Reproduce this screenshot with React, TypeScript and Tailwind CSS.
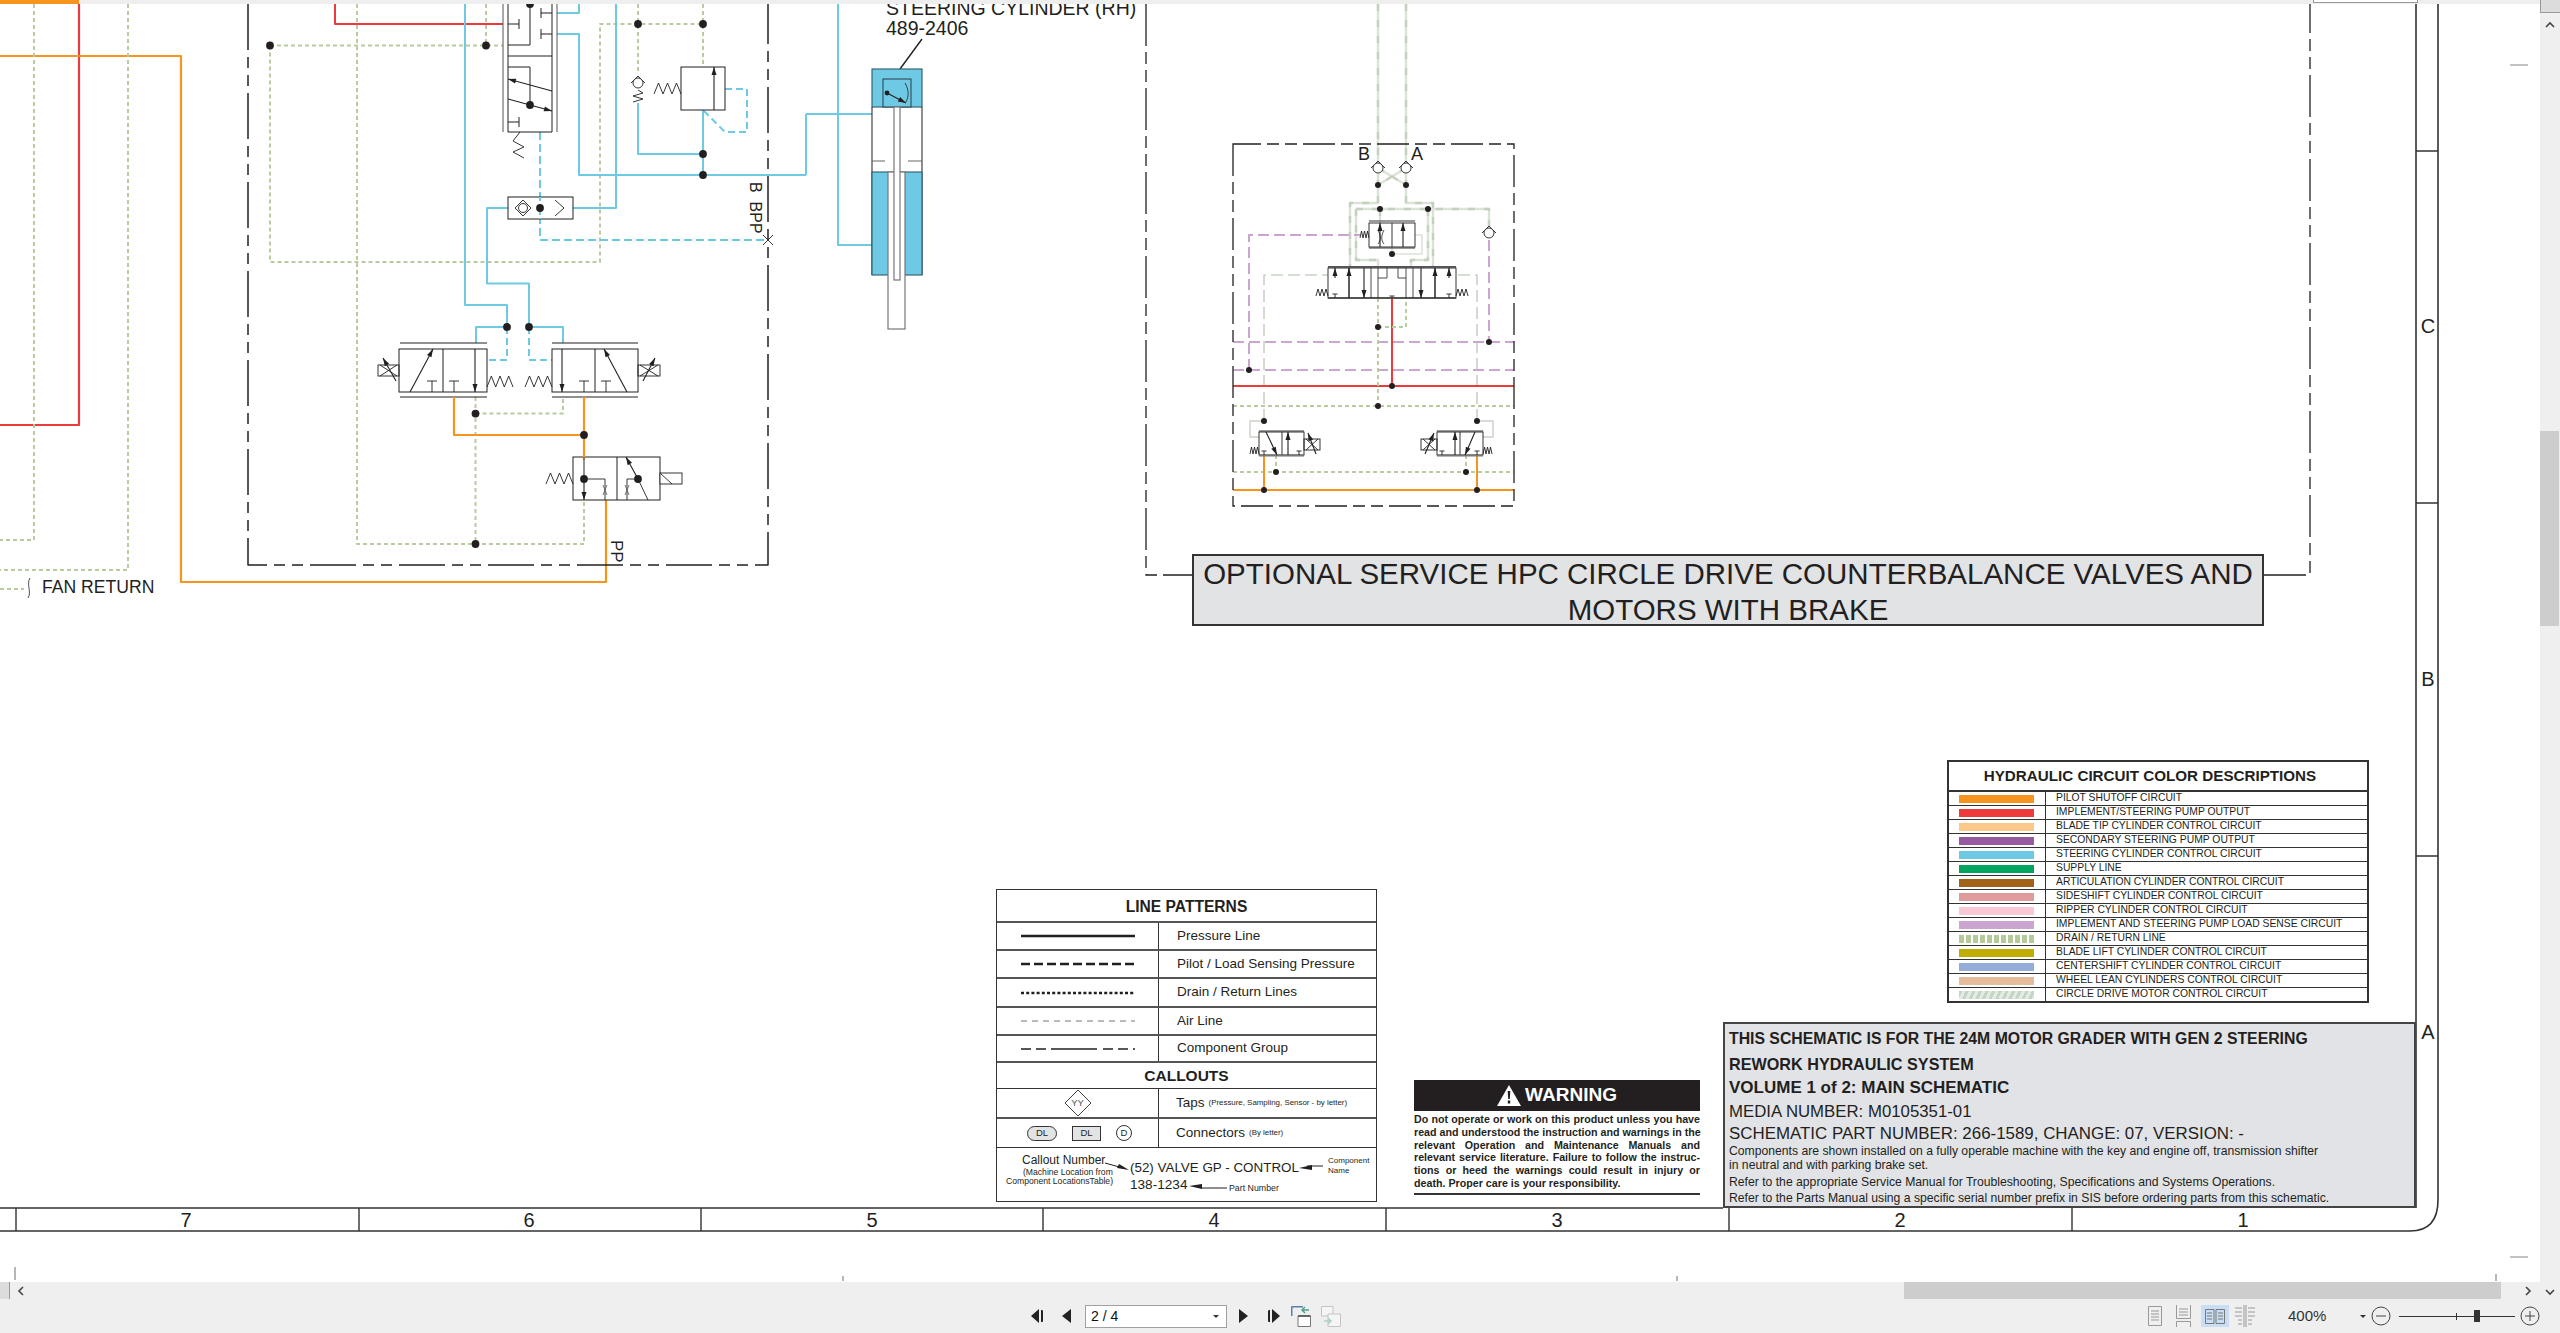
const INK = '#231f20';
const BLUE = '#6ecae4';
const ORANGE = '#f7941d';
const RED = '#ed3b3b';
const DRAIN = '#b9cc9f';
const PURPLE = '#cba5cf';
const HATCH = '#dbe3d9';
const HATCH2 = '#c3d2bf';
const AIR = '#c9d2c6';

const circuitRows = [
  { label: 'PILOT SHUTOFF CIRCUIT', swatch: 'bg-[#f7941d]' },
  { label: 'IMPLEMENT/STEERING PUMP OUTPUT', swatch: 'bg-[#ed3b3b]' },
  { label: 'BLADE TIP CYLINDER CONTROL CIRCUIT', swatch: 'bg-[#fdc98b]' },
  { label: 'SECONDARY STEERING PUMP OUTPUT', swatch: 'bg-[#97599f]' },
  { label: 'STEERING CYLINDER CONTROL CIRCUIT', swatch: 'bg-[#6ecae4]' },
  { label: 'SUPPLY LINE', swatch: 'bg-[#00a65f]' },
  { label: 'ARTICULATION CYLINDER CONTROL CIRCUIT', swatch: 'bg-[#a1631a]' },
  { label: 'SIDESHIFT CYLINDER CONTROL CIRCUIT', swatch: 'bg-[#df9a9b]' },
  { label: 'RIPPER CYLINDER CONTROL CIRCUIT', swatch: 'bg-[#f8c8d4]' },
  { label: 'IMPLEMENT AND STEERING PUMP LOAD SENSE CIRCUIT', swatch: 'bg-[#cba5cf]' },
  { label: 'DRAIN / RETURN LINE', swatch: 'bg-[repeating-linear-gradient(90deg,#b5c99a_0,#b5c99a_5px,transparent_5px,transparent_7px)]' },
  { label: 'BLADE LIFT CYLINDER CONTROL CIRCUIT', swatch: 'bg-[#bfae00]' },
  { label: 'CENTERSHIFT CYLINDER CONTROL CIRCUIT', swatch: 'bg-[#93acd8]' },
  { label: 'WHEEL LEAN CYLINDERS CONTROL CIRCUIT', swatch: 'bg-[#e5bd9b]' },
  { label: 'CIRCLE DRIVE MOTOR CONTROL CIRCUIT', swatch: 'bg-[repeating-linear-gradient(115deg,#c5d5c5_0,#c5d5c5_3px,#e4ebe4_3px,#e4ebe4_6px)]' },
];

const linePatterns = [
  { label: 'Pressure Line', h: 'h-[28px]', width: 2.4, dash: undefined, color: INK },
  { label: 'Pilot / Load Sensing Pressure', h: 'h-[28px]', width: 2.4, dash: '9 4', color: INK },
  { label: 'Drain / Return Lines', h: 'h-[29px]', width: 2.4, dash: '3 2.2', color: INK },
  { label: 'Air Line', h: 'h-[28px]', width: 1, dash: '6 5', color: '#777' },
  { label: 'Component Group', h: 'h-[27px]', width: 1.4, dash: '10 5 10 5 46 6 10 5 10 5', color: INK },
];

function Wire({ d, color, dash, w = 2 }: { d: string; color: string; dash?: string; w?: number }) {
  return <path d={d} fill="none" stroke={color} strokeWidth={w} strokeDasharray={dash} strokeLinejoin="round" />;
}

function Dot({ x, y }: { x: number; y: number }) {
  return <circle cx={x} cy={y} r={3.9} fill={INK} />;
}

function Arrow({ x1, y1, x2, y2, color = INK }: { x1: number; y1: number; x2: number; y2: number; color?: string }) {
  const a = Math.atan2(y2 - y1, x2 - x1);
  const px = (d: number, o: number) => `${x2 - d * Math.cos(a) - o * Math.sin(a)},${y2 - d * Math.sin(a) + o * Math.cos(a)}`;
  return (
    <g>
      <path d={`M${x1} ${y1}L${x2} ${y2}`} stroke={color} strokeWidth={1.1} />
      <polygon points={`${x2},${y2} ${px(8, 2.5)} ${px(8, -2.5)}`} fill={color} />
    </g>
  );
}

// zigzag spring between two x values
function Spring({ x0, x1, y0, y1, n = 3 }: { x0: number; x1: number; y0: number; y1: number; n?: number }) {
  const step = (x1 - x0) / (n * 2);
  let d = `M${x0} ${y1}`;
  for (let i = 1; i <= n * 2; i++) d += `L${x0 + step * i} ${i % 2 ? y0 : y1}`;
  return <path d={d} fill="none" stroke={INK} strokeWidth={0.9} />;
}

function Tee({ x, y, up = 11, cap = 5 }: { x: number; y: number; up?: number; cap?: number }) {
  return <path d={`M${x} ${y}V${y - up}M${x - cap} ${y - up}H${x + cap}`} stroke={INK} strokeWidth={0.9} fill="none" />;
}

function Check({ x, y, r = 5 }: { x: number; y: number; r?: number }) {
  return (
    <g>
      <path d={`M${x - r - 2} ${y}L${x} ${y - r - 2}L${x + r + 2} ${y}`} fill="none" stroke={INK} strokeWidth={0.9} />
      <circle cx={x} cy={y} r={r} fill="#fff" stroke={INK} strokeWidth={0.9} />
    </g>
  );
}

function Hatched({ d }: { d: string }) {
  return (
    <g>
      <Wire d={d} color={HATCH} w={2.4} />
      <Wire d={d} color={HATCH2} w={2.4} dash="7 9" />
    </g>
  );
}

// solenoid block with crossed variable arrow
function CrossSolenoid({ x, y, w, h }: { x: number; y: number; w: number; h: number }) {
  return (
    <g fill="none" stroke={INK} strokeWidth={0.9}>
      <rect x={x} y={y} width={w} height={h} />
      <path d={`M${x + 2} ${y}L${x + w - 2} ${y + h}M${x + w - 2} ${y}L${x + 2} ${y + h}`} />
    </g>
  );
}

function LeftSystem() {
  return (
    <g>
      <Wire d="M79 4V425H0" color={RED} w={2.2} />
      <Wire d="M0 56H181V582H606V500" color={ORANGE} w={2.2} />
      <Wire d="M34 4V540H0" color={DRAIN} dash="4 3" />
      <Wire d="M128 4V570H0" color={DRAIN} dash="4 3" />
      <Wire d="M0 589H24" color={DRAIN} dash="4 3" />
      <path d="M30 578C26 584 32 592 28 598" fill="none" stroke={INK} strokeWidth={0.8} />
      <text x={42} y={593} fontSize={17.6} fill={INK}>FAN RETURN</text>

      <Wire d="M248 4V565H768V4" color={INK} w={1.5} dash="46 7 11 7 11 7" />

      <Wire d="M335 4V24H503" color={RED} w={2} />
      <Wire d="M270 45.5H503M270 45.5V262H600V24H703M357 4V544H584V500M486 4V45M638 4V74M703 4V67" color={DRAIN} dash="4 3" />
      <Wire d="M475.5 397V544M475.5 413.6H563V397" color={DRAIN} dash="4 3" />

      <Wire d="M465 4V305H507V327H476V343M529 327H563V343M529 327V283.5H487V208H508M573 208H616V4" color={BLUE} w={2} />
      <Wire d="M557 13H579V4M557 34H579V175H806M806 114V175M806 114H872M838 4V245H872" color={BLUE} w={2} />
      <Wire d="M638 103V154H703M703 110V175" color={BLUE} w={2} />
      <Wire d="M507 327V360H487M529 327V360H552" color={BLUE} dash="7 4" />
      <Wire d="M540 132V240H768" color={BLUE} dash="8 4" />
      <Wire d="M725 89H747V132H725L703 110" color={BLUE} dash="7 4" />

      {/* top spool */}
      <g fill="none" stroke={INK} strokeWidth={1}>
        <path d="M503 4V132M557 4V132" stroke="#555" />
        <path d="M508 4V132H552V4M508 45H530V4M508 56H552M508 67H530V105" />
        <path d="M508 24H519M519 19V29" />
        <path d="M552 13H541M541 8V18M552 34H541M541 29V39M508 122H519M519 117V127" />
      </g>
      <Arrow x1={552} y1={91} x2={508} y2={79} />
      <Arrow x1={508} y1={99} x2={552} y2={111} />
      <path d="M520 132L513 141L524 147L513 152L524 158" fill="none" stroke={INK} strokeWidth={0.9} />

      {/* shuttle */}
      <rect x={508} y={197} width={65} height={22} fill="#fff" stroke={INK} strokeWidth={1} />
      <path d="M523 200L531 208L523 216L515 208ZM555 200L564 208L555 216" fill="none" stroke={INK} strokeWidth={0.9} />
      <circle cx={523} cy={208} r={4.5} fill="#fff" stroke={INK} strokeWidth={0.9} />
      <Wire d="M540 197V219" color={BLUE} dash="4 3" />

      {/* relief valve */}
      <rect x={681} y={67} width={44} height={43} fill="#fff" stroke={INK} strokeWidth={1} />
      <Arrow x1={714} y1={110} x2={714} y2={67} />
      <Spring x0={654} x1={681} y0={83} y1={94} />
      <Check x={638} y={83} />
      <path d="M638 90L643 93L633 96L643 99L633 102" fill="none" stroke={INK} strokeWidth={0.9} />

      {/* pilot valves */}
      <g fill="#fff" stroke={INK} strokeWidth={1}>
        <rect x={399} y={349} width={88} height={43} />
        <rect x={552} y={349} width={86} height={43} />
        <rect x={573} y={457} width={87} height={43} />
      </g>
      <path d="M400 343H487M400 397H487M552 343H638M552 397H638M443 349V392M595 349V392M617 457V500" stroke={INK} strokeWidth={1} fill="none" />
      <Arrow x1={410} y1={392} x2={433} y2={349} />
      <Tee x={432} y={392} />
      <Tee x={454} y={392} />
      <Arrow x1={475} y1={349} x2={475} y2={392} />
      <Spring x0={487} x1={513} y0={376} y1={387} />
      <CrossSolenoid x={378} y={365} w={21} h={11} />
      <Arrow x1={396} y1={381} x2={383} y2={358} />
      <Arrow x1={562} y1={349} x2={562} y2={392} />
      <Tee x={584} y={392} />
      <Tee x={606} y={392} />
      <Arrow x1={627} y1={392} x2={604} y2={349} />
      <Spring x0={525} x1={552} y0={376} y1={387} />
      <CrossSolenoid x={638} y={365} w={22} h={11} />
      <Arrow x1={643} y1={381} x2={655} y2={358} />

      <Wire d="M454 397V435H584M584 397V460" color={ORANGE} w={2.2} />
      <Wire d="M584 457V479" color="#666" w={1.4} />
      <Arrow x1={584} y1={479} x2={584} y2={500} />
      <path d="M584 479H605V500M627 500V479H638M648 500L638 479" fill="none" stroke={INK} strokeWidth={0.9} />
      <Arrow x1={638} y1={479} x2={626} y2={457} />
      <path d="M603 485L607 495M607 485L603 495M625 485L629 495M629 485L625 495" stroke="#555" strokeWidth={0.8} />
      <Spring x0={546} x1={573} y0={473} y1={484} />
      <rect x={660} y={473} width={22} height={11} fill="#fff" stroke={INK} strokeWidth={0.9} />
      <path d="M660 473L672 484" stroke={INK} strokeWidth={0.9} />

      {[[270, 45.5], [486, 45.5], [638, 24], [703, 24], [530, 4], [530, 105], [703, 154], [703, 175], [540, 208], [507, 327], [529, 327], [475.5, 413.6], [584, 435], [584, 479], [638, 479], [475.5, 544]].map(([x, y]) => (
        <Dot key={`${x}-${y}`} x={x} y={y} />
      ))}

      <path d="M763 235L773 245M773 235L763 245" stroke={INK} strokeWidth={0.9} />
      <text transform="translate(611 540) rotate(90)" fontSize={17} fill={INK}>PP</text>
      <text transform="translate(750 182) rotate(90)" fontSize={16} fill={INK} xmlSpace="preserve">B  BPP</text>

      {/* steering cylinder */}
      <text x={886} y={15} fontSize={19.5} fill={INK}>STEERING CYLINDER (RH)</text>
      <text x={886} y={35} fontSize={19.5} fill={INK}>489-2406</text>
      <path d="M922 39L900 69" stroke={INK} strokeWidth={1.4} />
      <rect x={872} y={69} width={50} height={38} fill={BLUE} stroke="#2a5b68" strokeWidth={1.1} />
      <rect x={883} y={79} width={28} height={28} fill={BLUE} stroke="#2a3b48" strokeWidth={1} />
      <Arrow x1={887} y1={93} x2={906} y2={103} />
      <circle cx={887} cy={93} r={2.4} fill={INK} />
      <path d="M905 83C909 90 909 96 906 102" fill="none" stroke={INK} strokeWidth={0.8} />
      <path d="M872 107V275M922 107V275" stroke="#333" strokeWidth={1.1} />
      <rect x={872} y={172} width={50} height={103} fill={BLUE} stroke="#2a5b68" strokeWidth={1.1} />
      <path d="M872 161H885M908 161H922" stroke="#666" strokeWidth={1.2} />
      <rect x={888} y={172} width={17} height={157} fill="#fff" stroke="#777" strokeWidth={1.2} />
      <rect x={894} y={107} width={6} height={173} fill="#fff" stroke="#777" strokeWidth={1.2} />
    </g>
  );
}

function ServiceGroup() {
  return (
    <g>
      <path d="M1146 4V575H1192M2264 575H2310V4" fill="none" stroke={INK} strokeWidth={1.3} strokeDasharray="42 6 12 6 12 6" />

      <Hatched d="M1378 4V203H1350V267M1406 4V203H1433V267" />
      <Hatched d="M1378 168L1406 185M1406 168L1378 185" />
      <Hatched d="M1356 209H1489V226M1356 209V260H1378V267M1428 209V260H1411V267M1380 209V247M1428 209V247" />
      <Wire d="M1415 235H1422V254H1392V247" color={HATCH} w={1.6} />
      <Wire d="M1264 421V275H1328M1477 421V275H1456" color={AIR} w={1.6} dash="12 5" />

      <Wire d="M1233 342H1514M1233 370H1514M1249 370V235H1360M1489 240V342" color={PURPLE} dash="11 5" />
      <Wire d="M1233 386H1514M1392 298V386" color={RED} w={2} />
      <Wire d="M1233 406H1514M1378 298V406M1378 327H1406V298" color={DRAIN} dash="4 3" />
      <Wire d="M1233 472H1514M1276 455V472M1466 455V472" color={DRAIN} dash="4 3" />
      <Wire d="M1233 490H1514M1264 455V490M1477 455V490" color={ORANGE} w={2} />
      <Wire d="M1264 421H1250V437H1259M1477 421H1493V437H1483" color={AIR} w={1.4} />

      <path d="M1233 144V506H1514V144Z" fill="none" stroke={INK} strokeWidth={1.3} strokeDasharray="32 6 12 6 12 6" />

      <text x={1358} y={160} fontSize={18} fill={INK}>B</text>
      <text x={1411} y={160} fontSize={18} fill={INK}>A</text>
      <Check x={1378} y={168} />
      <Check x={1406} y={168} />
      <Check x={1489} y={233} />

      {/* counterbalance spool */}
      <rect x={1369} y={223} width={46} height={24} fill="#fff" stroke={INK} strokeWidth={0.9} />
      <path d="M1369 221H1415M1369 248H1415M1392 223V247" stroke={INK} strokeWidth={0.9} />
      <Arrow x1={1380} y1={247} x2={1380} y2={223} />
      <Arrow x1={1403} y1={247} x2={1403} y2={223} />
      <path d="M1378 230C1381 236 1381 240 1378 244M1384 230C1381 236 1381 240 1384 244" fill="none" stroke={INK} strokeWidth={0.8} />
      <Spring x0={1360} x1={1369} y0={231} y1={238} />

      {/* motor control spool */}
      <rect x={1328} y={268} width={128} height={30} fill="#fff" stroke={INK} strokeWidth={0.9} />
      <path d="M1328 267H1456M1328 298H1456" stroke="#555" strokeWidth={2} />
      <path d="M1349 268V298M1371 268V298M1378 268V298M1406 268V298M1413 268V298M1435 268V298M1378 278H1387V268M1406 278H1398V268" stroke={INK} strokeWidth={0.8} fill="none" />
      <Arrow x1={1335} y1={278} x2={1335} y2={268} />
      <Arrow x1={1349} y1={298} x2={1349} y2={268} />
      <Arrow x1={1364} y1={268} x2={1364} y2={298} />
      <Arrow x1={1421} y1={268} x2={1421} y2={298} />
      <Arrow x1={1435} y1={298} x2={1435} y2={268} />
      <Arrow x1={1449} y1={278} x2={1449} y2={268} />
      <Tee x={1335} y={298} up={4} cap={2.5} />
      <Tee x={1449} y={298} up={4} cap={2.5} />
      <Tee x={1392} y={298} up={2} cap={2.5} />
      <Spring x0={1316} x1={1328} y0={289} y1={296} />
      <Spring x0={1456} x1={1468} y0={289} y1={296} />

      {/* brake valves */}
      <rect x={1259} y={432} width={45} height={23} fill="#fff" stroke={INK} strokeWidth={0.9} />
      <rect x={1437} y={432} width={46} height={23} fill="#fff" stroke={INK} strokeWidth={0.9} />
      <path d="M1259 431H1304M1437 431H1483M1282 432V455M1460 432V455" stroke={INK} strokeWidth={0.9} />
      <path d="M1259 455.5H1304M1437 455.5H1483" stroke="#777" strokeWidth={2} />
      <Arrow x1={1266} y1={432} x2={1277} y2={455} />
      <Arrow x1={1288} y1={455} x2={1288} y2={432} />
      <Tee x={1264} y={455} up={4} cap={2.5} />
      <Tee x={1299} y={455} up={4} cap={2.5} />
      <Spring x0={1250} x1={1259} y0={447} y1={454} />
      <CrossSolenoid x={1304} y={439} w={16} h={11} />
      <Arrow x1={1316} y1={454} x2={1308} y2={433} />
      <Arrow x1={1475} y1={432} x2={1465} y2={455} />
      <Arrow x1={1455} y1={455} x2={1455} y2={432} />
      <Tee x={1442} y={455} up={4} cap={2.5} />
      <Tee x={1477} y={455} up={4} cap={2.5} />
      <Spring x0={1483} x1={1492} y0={447} y1={454} />
      <CrossSolenoid x={1421} y={439} w={16} h={11} />
      <Arrow x1={1425} y1={454} x2={1434} y2={433} />

      {[[1378, 185], [1406, 185], [1380, 209], [1428, 209], [1392, 254], [1378, 327], [1489, 342], [1249, 370], [1392, 386], [1378, 406], [1264, 421], [1477, 421], [1276, 472], [1466, 472], [1264, 490], [1477, 490]].map(([x, y]) => (
        <circle key={`${x}-${y}`} cx={x} cy={y} r={3} fill={INK} />
      ))}
    </g>
  );
}

function DrawingFrame() {
  const ticks = [16, 359, 701, 1043, 1386, 1729, 2072];
  const numbers = [
    { n: 7, x: 186 },
    { n: 6, x: 529 },
    { n: 5, x: 872 },
    { n: 4, x: 1214 },
    { n: 3, x: 1557 },
    { n: 2, x: 1900 },
    { n: 1, x: 2243 },
  ];
  return (
    <g>
      <path d="M0 1208H1723M0 1231H2410Q2438 1231 2438 1200V4M2416 4V1208" fill="none" stroke="#333" strokeWidth={1.6} />
      <path d={ticks.map((x) => `M${x} 1208V1231`).join('') + 'M2416 151H2438M2416 503H2438M2416 856H2438'} stroke="#333" strokeWidth={1.4} />
      {numbers.map(({ n, x }) => (
        <text key={n} x={x} y={1227} fontSize={20} textAnchor="middle" fill={INK}>{n}</text>
      ))}
      <text x={2428} y={333} fontSize={20} textAnchor="middle" fill={INK}>C</text>
      <text x={2428} y={686} fontSize={20} textAnchor="middle" fill={INK}>B</text>
      <text x={2428} y={1039} fontSize={20} textAnchor="middle" fill={INK}>A</text>
      <path d="M15 1267V1280M843 1276V1281M1677 1276V1281M2496 1274V1281" stroke="#888" strokeWidth={1.2} />
      <path d="M2510 65H2528M2510 1257H2528" stroke="#888" strokeWidth={1.2} />
    </g>
  );
}

function CircuitLegend() {
  return (
    <div className="absolute left-[1947px] top-[756px] w-[422px] border-2 border-[#333] bg-white">
      <div className="flex h-[30px] items-center justify-center border-b-2 border-[#333] pr-[16px] text-[15.2px] font-bold">
        HYDRAULIC CIRCUIT COLOR DESCRIPTIONS
      </div>
      {circuitRows.map((row) => (
        <div key={row.label} className="flex h-[14px] items-center border-b border-[#333] last:h-[13px] last:border-b-0">
          <div className="flex h-full w-[97px] shrink-0 items-center border-r border-[#333] pl-[10px]">
            <div className={`h-[8px] w-[75px] ${row.swatch}`} />
          </div>
          <span className="pl-[10px] text-[10.35px] leading-none whitespace-nowrap">{row.label}</span>
        </div>
      ))}
    </div>
  );
}

function PatternLegend() {
  return (
    <div className="absolute left-[996px] top-[885px] flex w-[381px] flex-col border border-[#333] bg-white">
      <div className="flex h-[33px] items-center justify-center border-b-2 border-[#555] pt-[2px] text-[15.6px] font-bold">LINE PATTERNS</div>
      {linePatterns.map((p) => (
        <div key={p.label} className={`flex ${p.h} border-b-2 border-[#555] last:border-b`}>
          <div className="flex w-[162px] shrink-0 items-center justify-center border-r border-[#333]">
            <svg width="116" height="6">
              <path d="M1 3H115" stroke={p.color} strokeWidth={p.width} strokeDasharray={p.dash} />
            </svg>
          </div>
          <span className="flex items-center pl-[18px] text-[13.5px]">{p.label}</span>
        </div>
      ))}
      <div className="flex h-[26px] items-center justify-center border-b border-[#333] text-[15.5px] font-bold">CALLOUTS</div>
      <div className="flex h-[30px] border-b-2 border-[#555]">
        <div className="flex w-[162px] shrink-0 items-center justify-center border-r border-[#333]">
          <div className="relative flex h-[28px] w-[28px] items-center justify-center">
            <svg width="28" height="28" className="absolute inset-0">
              <path d="M14 1L27 14L14 27L1 14Z" fill="#fff" stroke="#444" strokeWidth={1} />
            </svg>
            <span className="relative text-[9.5px] text-[#555]">YY</span>
          </div>
        </div>
        <span className="flex items-center gap-[4px] pl-[17px] text-[13.5px]">
          Taps <span className="text-[7.9px]">(Pressure, Sampling, Sensor - by letter)</span>
        </span>
      </div>
      <div className="flex h-[29px] border-b border-[#333]">
        <div className="flex w-[162px] shrink-0 items-center gap-[15px] border-r border-[#333] pl-[30px]">
          <span className="flex h-[15px] w-[30px] items-center justify-center rounded-full border border-[#333] bg-[#e2e3e5] text-[9.5px]">DL</span>
          <span className="flex h-[15px] w-[29px] items-center justify-center border border-[#333] bg-[#e2e3e5] text-[9.5px]">DL</span>
          <span className="flex h-[16px] w-[16px] items-center justify-center rounded-full border border-[#333] text-[9.5px]">D</span>
        </div>
        <span className="flex items-center gap-[4px] pl-[17px] text-[13.5px]">
          Connectors <span className="text-[7.9px]">(By letter)</span>
        </span>
      </div>
      <CalloutExample />
    </div>
  );
}

function CalloutExample() {
  return (
    <div className="relative h-[53px]">
      <span className="absolute left-[25px] top-[6px] text-[12px] leading-none whitespace-nowrap">Callout Number</span>
      <span className="absolute left-[26px] top-[20px] text-[8.6px] leading-none whitespace-nowrap">(Machine Location from</span>
      <span className="absolute left-[9px] top-[29px] text-[8.6px] leading-none whitespace-nowrap">Component LocationsTable)</span>
      <span className="absolute left-[133px] top-[13px] text-[13.4px] leading-none whitespace-nowrap">(52) VALVE GP - CONTROL</span>
      <span className="absolute left-[133px] top-[30px] text-[13.6px] leading-none whitespace-nowrap">138-1234</span>
      <span className="absolute left-[232px] top-[36px] text-[8.8px] leading-none whitespace-nowrap">Part Number</span>
      <span className="absolute left-[331px] top-[9px] text-[8px] leading-none whitespace-nowrap">Component</span>
      <span className="absolute left-[331px] top-[19px] text-[8px] leading-none whitespace-nowrap">Name</span>
      <svg width="381" height="53" className="absolute inset-0">
        <path d="M108 15L126 20" stroke={INK} strokeWidth={1} />
        <polygon points="132,22 120,20 122,16" fill={INK} />
        <path d="M326 18H310" stroke={INK} strokeWidth={1} />
        <polygon points="302,20 315,17 315,22" fill={INK} />
        <path d="M230 40H204" stroke={INK} strokeWidth={1} />
        <polygon points="192,38 205,36 205,41" fill={INK} />
      </svg>
    </div>
  );
}

function WarningBox() {
  const lines = [
    'Do not operate or work on this product unless you have',
    'read and understood the instruction and warnings in the',
    'relevant Operation and Maintenance Manuals and',
    'relevant service literature. Failure to follow the instruc-',
    'tions or heed the warnings could result in injury or',
  ];
  return (
    <div className="absolute left-[1414px] top-[1076px] w-[286px] border-b-2 border-[#333] pb-[3px]">
      <div className="flex h-[31px] items-center justify-center gap-[4px] bg-[#231f20] text-[19px] font-bold text-white">
        <svg width="24" height="21" viewBox="0 0 24 21">
          <path d="M12 0L24 21H0Z" fill="#fff" />
          <path d="M10.7 6H13.3L12.8 14H11.2ZM10.8 15.5H13.2V18.5H10.8Z" fill="#231f20" />
        </svg>
        WARNING
      </div>
      <div className="pt-[2px] text-[10.7px] leading-[12.8px] font-bold">
        {lines.map((line) => (
          <p key={line} className="text-justify whitespace-nowrap [text-align-last:justify]">{line}</p>
        ))}
        <p>death. Proper care is your responsibility.</p>
      </div>
    </div>
  );
}

function TitleBlock() {
  return (
    <div className="absolute left-[1723px] top-[1018px] h-[186px] w-[693px] border-2 border-[#444] bg-[#e2e3e6] pl-[4px] whitespace-nowrap">
      <p className="pt-[3px] text-[15.8px] leading-[24.5px] font-bold">THIS SCHEMATIC IS FOR THE 24M MOTOR GRADER WITH GEN 2 STEERING</p>
      <p className="text-[16.2px] leading-[24.5px] font-bold">REWORK HYDRAULIC SYSTEM</p>
      <p className="text-[17px] leading-[24px] font-bold">VOLUME 1 of 2: MAIN SCHEMATIC</p>
      <p className="text-[16.8px] leading-[23px]">MEDIA NUMBER: M0105351-01</p>
      <p className="text-[16.9px] leading-[21px]">SCHEMATIC PART NUMBER: 266-1589, CHANGE: 07, VERSION: -</p>
      <p className="text-[12.2px] leading-[14px]">Components are shown installed on a fully operable machine with the key and engine off, transmission shifter</p>
      <p className="text-[12.2px] leading-[14px]">in neutral and with parking brake set.</p>
      <p className="pt-[2px] text-[12.2px] leading-[16px]">Refer to the appropriate Service Manual for Troubleshooting, Specifications and Systems Operations.</p>
      <p className="text-[12.2px] leading-[16px]">Refer to the Parts Manual using a specific serial number prefix in SIS before ordering parts from this schematic.</p>
    </div>
  );
}

function Chevron({ d }: { d: string }) {
  return (
    <svg width="10" height="10" viewBox="0 0 10 10">
      <path d={d} fill="none" stroke="#444" strokeWidth={1.6} />
    </svg>
  );
}

function PageNav() {
  return (
    <div className="flex items-center">
      <svg width="16" height="16" viewBox="0 0 16 16" className="ml-[1031px]">
        <path d="M8 1V15L0 8ZM10 2C11 2 12 2 12 3V13C12 14 11 14 10 14Z" fill="#222" />
      </svg>
      <svg width="10" height="16" viewBox="0 0 10 16" className="ml-[15px]">
        <path d="M9 1V15L0 8Z" fill="#222" />
      </svg>
      <div className="ml-[13px] flex h-[23px] w-[142px] items-center justify-between border border-[#a0a0a0] bg-white px-[5px] text-[14px] text-[#111]">
        <span>2 / 4</span>
        <span className="mr-[2px] h-0 w-0 border-x-[3px] border-t-[3px] border-x-transparent border-t-[#333]" />
      </div>
      <svg width="10" height="16" viewBox="0 0 10 16" className="ml-[11px]">
        <path d="M1 1V15L10 8Z" fill="#222" />
      </svg>
      <svg width="16" height="16" viewBox="0 0 16 16" className="ml-[16px]">
        <path d="M8 1V15L16 8ZM6 2C5 2 4 2 4 3V13C4 14 5 14 6 14Z" fill="#222" />
      </svg>
      <svg width="20" height="21" viewBox="0 0 20 21" className="ml-[11px]">
        <path d="M.5 .5H12M.5 .5V10" stroke="#5a7fa8" strokeWidth={2} fill="none" />
        <path d="M7 10H19.5V20.5H7Z" fill="#fff" stroke="#777" />
        <path d="M7 10H19.5" stroke="#666" strokeWidth={2} />
        <path d="M18 4H11M14 1L11 4L14 7" stroke="#4fa38a" strokeWidth={1.5} fill="none" />
      </svg>
      <svg width="20" height="21" viewBox="0 0 20 21" className="ml-[10px] opacity-40">
        <path d="M.5 .5H12V10H.5Z" fill="#fff" stroke="#888" />
        <path d="M7 8H19.5V20.5H7Z" fill="#fff" stroke="#888" />
        <path d="M3 15H10M7 12L10 15L7 18" stroke="#4fa38a" strokeWidth={1.5} fill="none" />
      </svg>
    </div>
  );
}

function ViewControls() {
  return (
    <div className="absolute top-0 left-[2148px] flex h-full items-center">
      <svg width="14" height="20" viewBox="0 0 14 20">
        <path d="M.5 .5H13.5V19.5H.5ZM3 5H11M3 8H11M3 11H11M3 14H11" fill="none" stroke="#999" />
      </svg>
      <svg width="15" height="22" viewBox="0 0 15 22" className="ml-[14px]">
        <path d="M.5 0V13.5H14.5V0M3 4H12M3 7H12M3 10H12M.5 22V16.5H14.5V22" fill="none" stroke="#999" />
      </svg>
      <div className="ml-[10px] flex h-[22px] w-[28px] items-center justify-center bg-[#c9def5]">
        <svg width="20" height="15" viewBox="0 0 20 15">
          <path d="M.5 .5H9V14.5H.5ZM11 .5H19.5V14.5H11ZM2 4H7M2 7H7M2 10H7M13 4H18M13 7H18M13 10H18" fill="none" stroke="#777" />
        </svg>
      </div>
      <svg width="20" height="22" viewBox="0 0 20 22" className="ml-[6px]">
        <path d="M9 0V22M11 0V22M0 3H7M0 7H7M0 11H7M3 15H7M3 19H7M13 3H20M13 7H20M13 11H20M13 15H17M13 19H17" fill="none" stroke="#999" />
      </svg>
      <span className="ml-[33px] w-[60px] text-[15px] text-[#333]">400%</span>
      <span className="ml-[12px] h-0 w-0 border-x-[3px] border-t-[3px] border-x-transparent border-t-[#333]" />
      <svg width="20" height="20" viewBox="0 0 20 20" className="ml-[5px]">
        <circle cx="10" cy="10" r="9" fill="none" stroke="#444" />
        <path d="M5 10H15" stroke="#444" />
      </svg>
      <div className="relative ml-[8px] h-[1px] w-[116px] bg-[#333]">
        <span className="absolute top-[-3px] left-[57px] h-[7px] w-[1px] bg-[#333]" />
        <span className="absolute top-[-6px] left-[75px] h-[12px] w-[6px] bg-[#333]" />
      </div>
      <svg width="20" height="20" viewBox="0 0 20 20" className="ml-[5px]">
        <circle cx="10" cy="10" r="9" fill="none" stroke="#444" />
        <path d="M5 10H15M10 5V15" stroke="#444" />
      </svg>
    </div>
  );
}

export default function App() {
  return (
    <div className="flex h-screen w-full flex-col overflow-hidden bg-white font-['Liberation_Sans',Arial,sans-serif] text-[#231f20]">
      <div className="flex min-h-0 flex-1">
        <div className="flex min-w-0 flex-1 flex-col">
          <div className="relative h-[4px] shrink-0 bg-[#eeeeee]">
            <div className="h-full w-[79px] bg-[#f7941d]" />
            <div className="absolute top-0 left-[2313px] h-[3px] w-[105px] border-x border-b border-[#999] bg-white" />
          </div>
          <main className="relative min-h-0 flex-1 overflow-hidden">
            <svg width="2540" height="1278" viewBox="0 4 2540 1278" className="absolute inset-0">
              <DrawingFrame />
              <LeftSystem />
              <ServiceGroup />
            </svg>
            <div className="absolute left-[1192px] top-[550px] h-[72px] w-[1072px] border-2 border-[#333] bg-[#e2e3e5] text-center text-[29.5px] leading-[36px] whitespace-nowrap">
              OPTIONAL SERVICE HPC CIRCLE DRIVE COUNTERBALANCE VALVES AND
              <br />
              MOTORS WITH BRAKE
            </div>
            <CircuitLegend />
            <PatternLegend />
            <WarningBox />
            <TitleBlock />
          </main>
          <div className="flex h-[17px] shrink-0 items-center bg-[#efefef]">
            <div className="h-full w-[10px] border-r border-[#999] bg-[#dcdcdc]" />
            <div className="ml-[6px] flex">
              <Chevron d="M7 1L3 5L7 9" />
            </div>
            <div className="ml-[1878px] h-full w-[597px] bg-[#cdcdcd]" />
            <div className="ml-[22px] flex">
              <Chevron d="M3 1L7 5L3 9" />
            </div>
          </div>
        </div>
        <aside className="flex w-[20px] shrink-0 flex-col items-center bg-[#efefef]">
          <div className="h-[13px] w-full border-b border-l border-[#999] bg-[#dcdcdc]" />
          <div className="mt-[7px] flex">
            <Chevron d="M1 7L5 3L9 7" />
          </div>
          <div className="mt-[401px] h-[195px] w-[19px] self-start bg-[#cdcdcd]" />
          <div className="mt-auto mb-[2px] flex">
            <Chevron d="M1 3L5 7L9 3" />
          </div>
        </aside>
      </div>
      <footer className="relative flex h-[34px] shrink-0 items-center bg-[#efefef]">
        <PageNav />
        <ViewControls />
      </footer>
    </div>
  );
}
